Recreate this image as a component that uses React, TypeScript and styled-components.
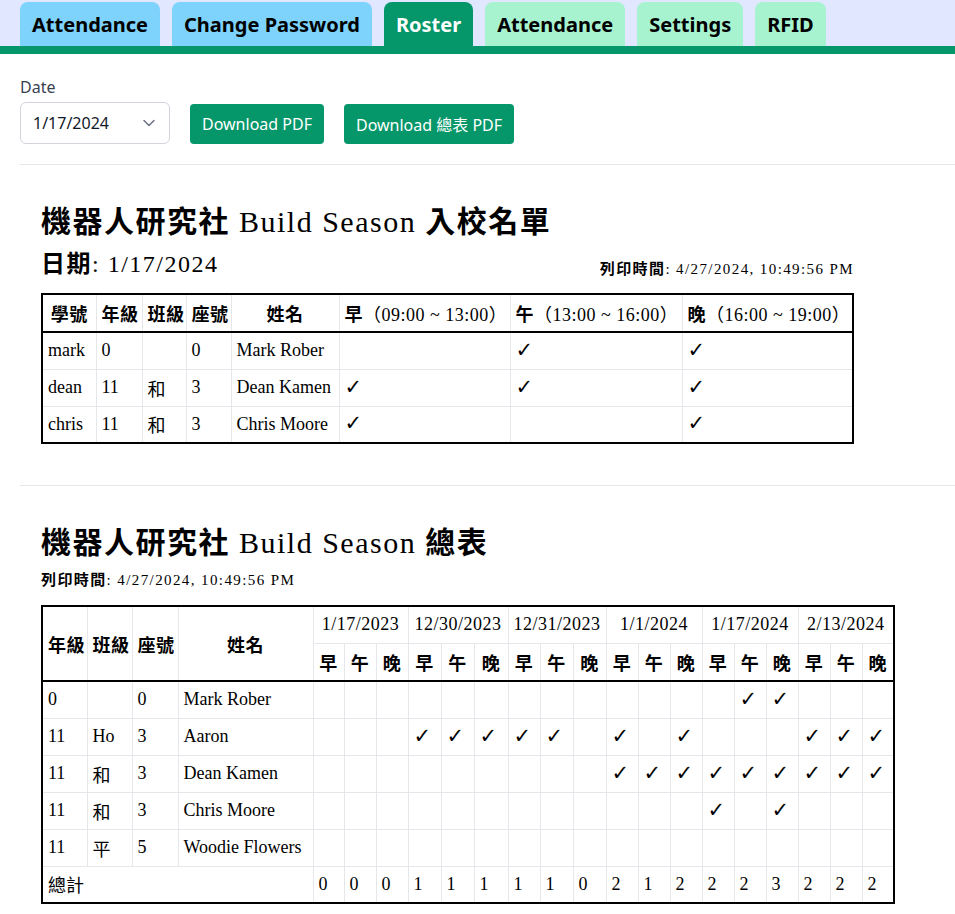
import React from 'react';
import styled, { createGlobalStyle } from 'styled-components';
import { ChevronDown } from 'lucide-react';

const GlobalStyle = createGlobalStyle`
  html, body { margin: 0; padding: 0; background: #ffffff; }
  body {
    font-family: "Noto Sans", "Noto Sans CJK TC", sans-serif;
    color: #111827;
  }
  * { box-sizing: border-box; }
`;

const SERIF = `"Liberation Serif", "Noto Sans CJK TC", serif`;

type TabKind = 'blue' | 'active' | 'green';
const tabBg: Record<TabKind, string> = { blue: '#7dd3fc', active: '#059669', green: '#a7f3d0' };
const tabFg: Record<TabKind, string> = { blue: '#000000', active: '#ffffff', green: '#000000' };

const TabBar = styled.nav`
  display: flex;
  gap: 12px;
  padding: 2px 20px 0;
  background: #e0e7ff;
  border-bottom: 8px solid #059669;
`;

const Tab = styled.div<{ $kind: TabKind }>`
  height: 44px;
  padding: 0 12px;
  display: flex;
  align-items: center;
  border-radius: 8px 8px 0 0;
  font-size: 20px;
  font-weight: 700;
  background: ${(p) => tabBg[p.$kind]};
  color: ${(p) => tabFg[p.$kind]};
`;

const Main = styled.main`
  padding-left: 20px;
`;

const Controls = styled.section`
  padding: 21px 0 20px;
`;

const FieldLabel = styled.label`
  display: block;
  font-size: 16px;
  line-height: 24px;
  color: #374151;
  margin-bottom: 3px;
`;

const Toolbar = styled.div`
  display: flex;
  align-items: flex-end;
  gap: 20px;
`;

const SelectBox = styled.div`
  width: 150px;
  height: 42px;
  border: 1px solid #d1d5db;
  border-radius: 6px;
  display: flex;
  align-items: center;
  justify-content: space-between;
  padding: 0 10px 0 12px;
  font-size: 16px;
  color: #111827;
  background: #fff;
`;

const Button = styled.button`
  height: 40px;
  padding: 0 12px;
  border: none;
  border-radius: 4px;
  background: #059669;
  color: #ffffff;
  font-family: "Noto Sans", "Noto Sans CJK TC", sans-serif;
  font-size: 16px;
  cursor: pointer;
`;

const Divider = styled.hr`
  border: 0;
  border-top: 1px solid #e5e7eb;
  margin: 0;
`;

const Report = styled.section`
  padding: 39px 0 41px 21px;
  font-family: ${SERIF};
  color: #000;
`;

const Title = styled.h1`
  margin: 0;
  font-size: 30px;
  line-height: 36px;
  font-weight: 400;
  letter-spacing: 1.5px;
`;

const Bold = styled.span`
  font-weight: 700;
`;

const DateRow = styled.div<{ $w: number }>`
  display: flex;
  justify-content: space-between;
  align-items: flex-end;
  width: ${(p) => p.$w}px;
  margin-top: 9px;
`;

const DateText = styled.div`
  font-size: 24px;
  line-height: 30px;
  letter-spacing: 1.5px;
`;

const PrintTime = styled.div<{ $top?: number }>`
  font-size: 15px;
  line-height: 20px;
  letter-spacing: 1.4px;
  margin-top: ${(p) => p.$top ?? 0}px;
`;

const Table = styled.table<{ $w: number; $top: number }>`
  border-collapse: collapse;
  table-layout: fixed;
  width: ${(p) => p.$w}px;
  margin-top: ${(p) => p.$top}px;
  border: 2px solid #000;
  font-size: 18px;
  font-family: ${SERIF};
`;

const Col = styled.col<{ $w: number }>`
  width: ${(p) => p.$w}px;
`;

const Th = styled.th<{ $h?: number; $last?: boolean }>`
  border: 1px solid #e5e7eb;
  border-bottom: ${(p) => (p.$last ? '2px solid #000' : '1px solid #e5e7eb')};
  padding: 0 5px;
  height: ${(p) => p.$h ?? 37}px;
  font-weight: 400;
  text-align: center;
  white-space: nowrap;
  letter-spacing: 0.5px;
`;

const Td = styled.td`
  border: 1px solid #e5e7eb;
  padding: 0 5px;
  height: 37px;
  text-align: left;
  white-space: nowrap;
`;

const Check = styled.span`
  font-family: "DejaVu Sans", sans-serif;
  font-weight: 700;
  font-size: 21px;
  line-height: 1;
`;

const PRINT = '4/27/2024, 10:49:56 PM';

type Row1 = { id: string; grade: string; cls: string; seat: string; name: string; slots: boolean[] };
const roster: Row1[] = [
  { id: 'mark', grade: '0', cls: '', seat: '0', name: 'Mark Rober', slots: [false, true, true] },
  { id: 'dean', grade: '11', cls: '和', seat: '3', name: 'Dean Kamen', slots: [true, true, true] },
  { id: 'chris', grade: '11', cls: '和', seat: '3', name: 'Chris Moore', slots: [true, false, true] },
];
const rosterCols = [54, 46, 44, 45, 108, 171, 172, 171];

const dates = ['1/17/2023', '12/30/2023', '12/31/2023', '1/1/2024', '1/17/2024', '2/13/2024'];
const slotCols = [31, 32, 32, 33, 33, 34, 32, 33, 33, 32, 32, 32, 32, 32, 32, 32, 32, 32];
const summaryCols = [45, 45, 46, 135, ...slotCols];

type Row2 = { grade: string; cls: string; seat: string; name: string; on: number[] };
const summary: Row2[] = [
  { grade: '0', cls: '', seat: '0', name: 'Mark Rober', on: [13, 14] },
  { grade: '11', cls: 'Ho', seat: '3', name: 'Aaron', on: [3, 4, 5, 6, 7, 9, 11, 15, 16, 17] },
  { grade: '11', cls: '和', seat: '3', name: 'Dean Kamen', on: [9, 10, 11, 12, 13, 14, 15, 16, 17] },
  { grade: '11', cls: '和', seat: '3', name: 'Chris Moore', on: [12, 14] },
  { grade: '11', cls: '平', seat: '5', name: 'Woodie Flowers', on: [] },
];

const sum = (a: number[]) => a.reduce((x, y) => x + y, 0);

export default function App() {
  const totals = slotCols.map((_, i) => summary.filter((r) => r.on.includes(i)).length);
  const w1 = sum(rosterCols);
  const w2 = sum(summaryCols);
  return (
    <>
      <GlobalStyle />
      <TabBar>
        <Tab $kind="blue">Attendance</Tab>
        <Tab $kind="blue">Change Password</Tab>
        <Tab $kind="active">Roster</Tab>
        <Tab $kind="green">Attendance</Tab>
        <Tab $kind="green">Settings</Tab>
        <Tab $kind="green">RFID</Tab>
      </TabBar>
      <Main>
        <Controls>
          <FieldLabel>Date</FieldLabel>
          <Toolbar>
            <SelectBox>
              <span>1/17/2024</span>
              <ChevronDown size={20} strokeWidth={1.75} color="#6b7280" />
            </SelectBox>
            <Button>Download PDF</Button>
            <Button>Download 總表 PDF</Button>
          </Toolbar>
        </Controls>
        <Divider />
        <Report>
          <Title>
            <Bold>機器人研究社</Bold> Build Season <Bold>入校名單</Bold>
          </Title>
          <DateRow $w={w1 + 2}>
            <DateText>
              <Bold>日期</Bold>: 1/17/2024
            </DateText>
            <PrintTime>
              <Bold>列印時間</Bold>: {PRINT}
            </PrintTime>
          </DateRow>
          <Table $w={w1 + 2} $top={14}>
            <colgroup>
              {rosterCols.map((w, i) => (
                <Col key={i} $w={w} />
              ))}
            </colgroup>
            <thead>
              <tr>
                {['學號', '年級', '班級', '座號', '姓名'].map((h) => (
                  <Th key={h} $h={38} $last>
                    <Bold>{h}</Bold>
                  </Th>
                ))}
                <Th $h={38} $last>
                  <Bold>早</Bold>（09:00 ~ 13:00）
                </Th>
                <Th $h={38} $last>
                  <Bold>午</Bold>（13:00 ~ 16:00）
                </Th>
                <Th $h={38} $last>
                  <Bold>晚</Bold>（16:00 ~ 19:00）
                </Th>
              </tr>
            </thead>
            <tbody>
              {roster.map((r) => (
                <tr key={r.id}>
                  <Td>{r.id}</Td>
                  <Td>{r.grade}</Td>
                  <Td>{r.cls}</Td>
                  <Td>{r.seat}</Td>
                  <Td>{r.name}</Td>
                  {r.slots.map((on, i) => (
                    <Td key={i}>{on ? <Check>✓</Check> : null}</Td>
                  ))}
                </tr>
              ))}
            </tbody>
          </Table>
        </Report>
        <Divider />
        <Report>
          <Title>
            <Bold>機器人研究社</Bold> Build Season <Bold>總表</Bold>
          </Title>
          <PrintTime $top={9}>
            <Bold>列印時間</Bold>: {PRINT}
          </PrintTime>
          <Table $w={w2 + 2} $top={15}>
            <colgroup>
              {summaryCols.map((w, i) => (
                <Col key={i} $w={w} />
              ))}
            </colgroup>
            <thead>
              <tr>
                {['年級', '班級', '座號', '姓名'].map((h) => (
                  <Th key={h} rowSpan={2} $last>
                    <Bold>{h}</Bold>
                  </Th>
                ))}
                {dates.map((d) => (
                  <Th key={d} colSpan={3}>
                    {d}
                  </Th>
                ))}
              </tr>
              <tr>
                {dates.map((d) =>
                  ['早', '午', '晚'].map((s) => (
                    <Th key={d + s} $h={38} $last>
                      <Bold>{s}</Bold>
                    </Th>
                  ))
                )}
              </tr>
            </thead>
            <tbody>
              {summary.map((r) => (
                <tr key={r.name}>
                  <Td>{r.grade}</Td>
                  <Td>{r.cls}</Td>
                  <Td>{r.seat}</Td>
                  <Td>{r.name}</Td>
                  {slotCols.map((_, i) => (
                    <Td key={i}>{r.on.includes(i) ? <Check>✓</Check> : null}</Td>
                  ))}
                </tr>
              ))}
              <tr>
                <Td colSpan={4}>總計</Td>
                {totals.map((t, i) => (
                  <Td key={i}>{t}</Td>
                ))}
              </tr>
            </tbody>
          </Table>
        </Report>
      </Main>
    </>
  );
}
